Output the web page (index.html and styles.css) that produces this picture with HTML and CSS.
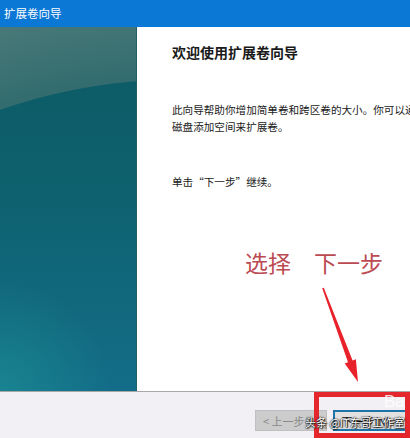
FILE: index.html
```html
<!DOCTYPE html>
<html lang="zh-CN">
<head>
<meta charset="utf-8">
<title>扩展卷向导</title>
<link rel="stylesheet" href="styles.css">
</head>
<body>
<div class="window">
  <header class="titlebar">扩展卷向导</header>
  <main class="main">
    <aside class="side"></aside>
    <section class="content">
      <h1 class="heading">欢迎使用扩展卷向导</h1>
      <p class="intro">此向导帮助你增加简单卷和跨区卷的大小。你可以通过从其他<br>磁盘添加空间来扩展卷。</p>
      <p class="hint">单击“下一步”继续。</p>
    </section>
  </main>
  <footer class="footer">
    <button class="btn btn-disabled" disabled>&lt; 上一步(B)</button>
    <button class="btn btn-default">下一步(N) &gt;</button>
  </footer>

  <div class="note">选择　下一步</div>
  <svg class="arrow" width="410" height="438" viewBox="0 0 410 438">
    <polygon points="323.8,287.7 352.6,360.5 355.9,359.3 358,382 344.7,363.5 348,362.3 322.2,288.3" fill="#e8222b"/>
  </svg>
  <div class="mark-box"></div>
  <div class="stamp">Ba</div>
  <div class="credit">头条 @IT东哥工作室</div>
</div>
</body>
</html>
```

FILE: styles.css
```css
html, body {
  margin: 0;
  padding: 0;
  background: #f2f0f4;
}

.window {
  position: relative;
  width: 410px;
  height: 438px;
  overflow: hidden;
  display: flex;
  flex-direction: column;
  font-family: "Noto Sans CJK SC", "Noto Sans", sans-serif;
}

.titlebar {
  height: 27px;
  flex: none;
  background: #0b78d6;
  color: #fff;
  font-size: 11.5px;
  line-height: 27px;
  padding-left: 4px;
}

.main {
  height: 364px;
  flex: none;
  display: flex;
}

/* Wizard side art: a large dark arc over a grey-teal sky */
.side {
  width: 136px;
  flex: none;
  border-right: 1px solid #22606a;
  background:
    radial-gradient(circle at 180px 600px, transparent 547px, #326c6e 548px, #477878 620px),
    radial-gradient(ellipse 110px 110px at 0 100%, rgba(30, 150, 152, 0.55), rgba(30, 150, 152, 0) 100%),
    linear-gradient(to bottom, #0c5965 0, #0e616e 45%, #11687d 75%, #136d88 100%);
}

.content {
  flex: 1;
  min-width: 0;
  overflow: hidden;
  background: #fff;
  padding-left: 35px;
  color: #1a1a1a;
  white-space: nowrap;
}

.heading {
  margin: 15px 0 0;
  font-size: 14px;
  font-weight: bold;
  line-height: 20px;
}

.intro {
  margin: 39px 0 0;
  font-size: 10.6px;
  line-height: 17px;
}

.hint {
  margin: 38px 0 0;
  font-size: 10.6px;
  line-height: 17px;
}

.footer {
  flex: 1;
  border-top: 1px solid #a8a8a8;
  background: #f2f0f4;
  display: flex;
  justify-content: flex-end;
  align-items: flex-start;
  gap: 6px;
  padding: 18px 3px 0 0;
}

.btn {
  height: 21px;
  font-family: inherit;
  font-size: 11px;
  padding: 0;
  box-sizing: border-box;
  white-space: nowrap;
  overflow: hidden;
}

.btn-disabled {
  width: 72px;
  background: #cccccc;
  border: 1px solid #bfbfbf;
  color: #8a8a8a;
}

.btn-default {
  width: 74px;
  background: #e1e1e1;
  border: 2px solid #1c74a8;
  color: #111;
}

/* Annotation layer drawn over the dialog */
.note {
  position: absolute;
  left: 245px;
  top: 246px;
  font-size: 23px;
  line-height: 32px;
  color: #bb4a52;
}

.arrow {
  position: absolute;
  left: 0;
  top: 0;
}

.mark-box {
  position: absolute;
  left: 314px;
  top: 392px;
  width: 96px;
  height: 46px;
  box-sizing: border-box;
  border: 5px solid #e4262d;
}

.stamp {
  position: absolute;
  left: 384px;
  top: 393px;
  font-family: "Liberation Sans", sans-serif;
  font-size: 17px;
  line-height: 18px;
  color: rgba(255, 255, 255, 0.85);
}

.credit {
  position: absolute;
  left: 305px;
  top: 414px;
  font-size: 11px;
  line-height: 16px;
  color: #fff;
  text-shadow: 0 0 2px #000, 0 0 1px #000, 1px 1px 1px #333;
}
```
